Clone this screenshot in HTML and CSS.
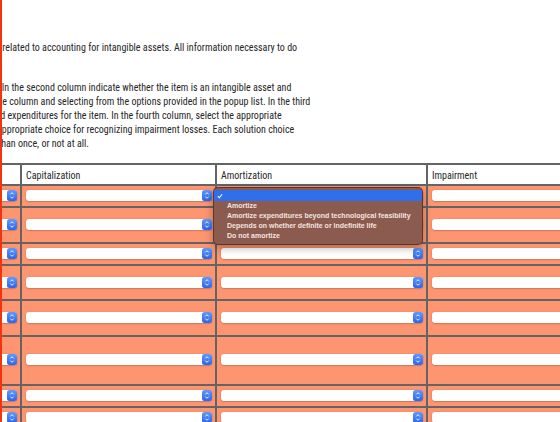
FILE: index.html
```html
<!DOCTYPE html>
<html lang="en">
<head>
  <meta charset="UTF-8" />
  <meta name="viewport" content="width=device-width, initial-scale=1.0"/>
  <title>Intangible Assets Exercise</title>
<link rel="stylesheet" href="styles.css">
</head>
<body>
  <div class="page">
    <p class="intro">The following exercise presents a series of short independent situations related to accounting for intangible assets. All information necessary to do<br>the exercise is given in the list below.</p>
    <p class="intro">For each item listed in the first column, determine the correct treatment. In the second column indicate whether the item is an intangible asset and<br>how its costs should be treated, by clicking on each cell in the appropriate column and selecting from the options provided in the popup list. In the third<br>column, select the appropriate accounting treatment for these capitalized expenditures for the item. In the fourth column, select the appropriate<br>treatment regarding the amortization, and in the fifth column select the appropriate choice for recognizing impairment losses. Each solution choice<br>may be selected for any number of items, so it may be used once, more than once, or not at all.</p>

    <table class="grid">
      <thead>
        <tr>
          <th class="col-item">Item</th>
          <th class="col-intangible">Intangible asset?</th>
          <th class="col-cap">Capitalization</th>
          <th class="col-amort">Amortization</th>
          <th class="col-impair">Impairment</th>
        </tr>
      </thead>
      <tbody id="rows"></tbody>
    </table>
  </div>

  <script>
    const items = [
      ["Patent purchased from its inventor"],
      ["Research costs incurred to develop", "a new product line"],
      ["Goodwill from a business acquisition"],
      ["Software development costs after", "technological feasibility"],
      ["Trademark with an indefinite life", "registered by the company"],
      ["Franchise acquired for a", "ten-year period with an option", "to renew"],
      ["Copyright purchased"],
      ["Customer list acquired"]
    ];

    const choices = {
      intangible: ["", "Yes", "No"],
      cap: ["", "Capitalize purchase cost", "Expense as incurred", "Capitalize legal fees only"],
      amort: ["", "Amortize", "Amortize expenditures beyond technological feasibility", "Depends on whether definite or indefinite life", "Do not amortize"],
      impair: ["", "Test annually", "Test when events indicate", "Not applicable"]
    };

    const rows = document.getElementById("rows");

    function picker(options) {
      return `
        <span class="picker">
          <select>${options.map(o => `<option>${o}</option>`).join("")}</select>
          <span class="stepper"><svg viewBox="0 0 10 11"><path d="M3.3 4.4 5 2.7 6.7 4.4M3.3 6.6 5 8.3 6.7 6.6"/></svg></span>
        </span>`;
    }

    function openMenu(options) {
      return `
        <ul class="menu">
          <li class="current"><svg class="tick" viewBox="0 0 7 6"><path d="M1 3.2 2.7 5 6 1"/></svg></li>
          ${options.slice(1).map(o => `<li>${o}</li>`).join("")}
        </ul>`;
    }

    items.forEach((lines, i) => {
      const tr = document.createElement("tr");
      tr.innerHTML = `
        <td class="item">${lines.join("<br>")}</td>
        <td>${picker(choices.intangible)}</td>
        <td>${picker(choices.cap)}</td>
        <td class="amort">${picker(choices.amort)}${i === 0 ? openMenu(choices.amort) : ""}</td>
        <td>${picker(choices.impair)}</td>
      `;
      rows.appendChild(tr);
    });
  </script>
</body>
</html>
```

FILE: styles.css
```css
:root {
  --grid-line: #646464;
  --row-bg: #fe9571;
  --text: #262626;
  --menu-bg: #8c5b4f;
  --highlight: #2f6fea;
}

html {
  overflow: hidden;
}

body {
  margin: 0;
  font-family: "Roboto Condensed", "Liberation Sans Narrow", "DejaVu Sans Condensed", sans-serif;
  font-size: 10px;
  color: var(--text);
  background-color: #fff;
}

/* red frame edge on the left of the window */
body::before {
  content: "";
  position: fixed;
  top: 0;
  bottom: 0;
  left: 0;
  width: 2px;
  background-color: #f4340e;
  z-index: 10;
}

.page {
  margin-left: -284px;
  padding-top: 41px;
}

.intro {
  margin: 0 0 12px;
  line-height: 14px;
  white-space: nowrap;
}

.grid {
  margin-top: 1px;
  table-layout: fixed;
  width: 932px;
  border-collapse: separate;
  border-spacing: 0;
  border-top: 2px solid var(--grid-line);
  border-left: 2px solid var(--grid-line);
}

.grid th,
.grid td {
  box-sizing: border-box;
  padding: 3px 3px 3.5px 4px;
  line-height: 13.5px;
  text-align: left;
  vertical-align: middle;
  border-right: 2px solid var(--grid-line);
  border-bottom: 2px solid var(--grid-line);
}

.grid th {
  font-weight: normal;
  padding-top: 4px;
  padding-bottom: 1.5px;
  background-color: #fff;
}

.grid td {
  background-color: var(--row-bg);
}

.grid td.item {
  white-space: nowrap;
  overflow: hidden;
}

.col-item { width: 200px; }
.col-intangible { width: 104px; }
.col-cap { width: 195px; }
.col-amort { width: 211px; }
.col-impair { width: 220px; }

.amort {
  position: relative;
}

/* mac style popup button */
.picker {
  position: relative;
  display: block;
  height: 11px;
}

.picker select {
  display: block;
  width: 100%;
  height: 11px;
  margin: 0;
  padding: 0 12px 0 4px;
  border: 0;
  border-radius: 3px;
  background-color: #fff;
  box-shadow: 0 0.5px 1.5px rgba(0, 0, 0, 0.35);
  font: 8px "Liberation Sans", sans-serif;
  -webkit-appearance: none;
  appearance: none;
}

.stepper {
  position: absolute;
  top: 0;
  right: 0;
  width: 10px;
  height: 11px;
  border-radius: 2.5px;
  background: linear-gradient(#5e9afc, #2b64ee);
}

.stepper svg {
  display: block;
  width: 10px;
  height: 11px;
  fill: none;
  stroke: #fff;
  stroke-width: 0.9;
}

/* the open option list of the first amortization cell */
.menu {
  position: absolute;
  top: 1px;
  left: -4px;
  width: 210px;
  margin: 0;
  padding: 2px 0 3px;
  box-sizing: border-box;
  list-style: none;
  background-color: var(--menu-bg);
  border: 1px solid rgba(70, 38, 30, 0.7);
  border-radius: 5px;
  box-shadow: 0 3px 8px rgba(0, 0, 0, 0.3);
  z-index: 5;
}

.menu li {
  height: 10px;
  padding-left: 13px;
  font: bold 7px/10px "Liberation Sans", sans-serif;
  color: #f3e4df;
  white-space: nowrap;
}

.menu li.current {
  position: relative;
  height: 11px;
  background-color: var(--highlight);
}

.tick {
  position: absolute;
  top: 2.5px;
  left: 3px;
  width: 6px;
  height: 6px;
  fill: none;
  stroke: #fff;
  stroke-width: 1.2;
}
```
